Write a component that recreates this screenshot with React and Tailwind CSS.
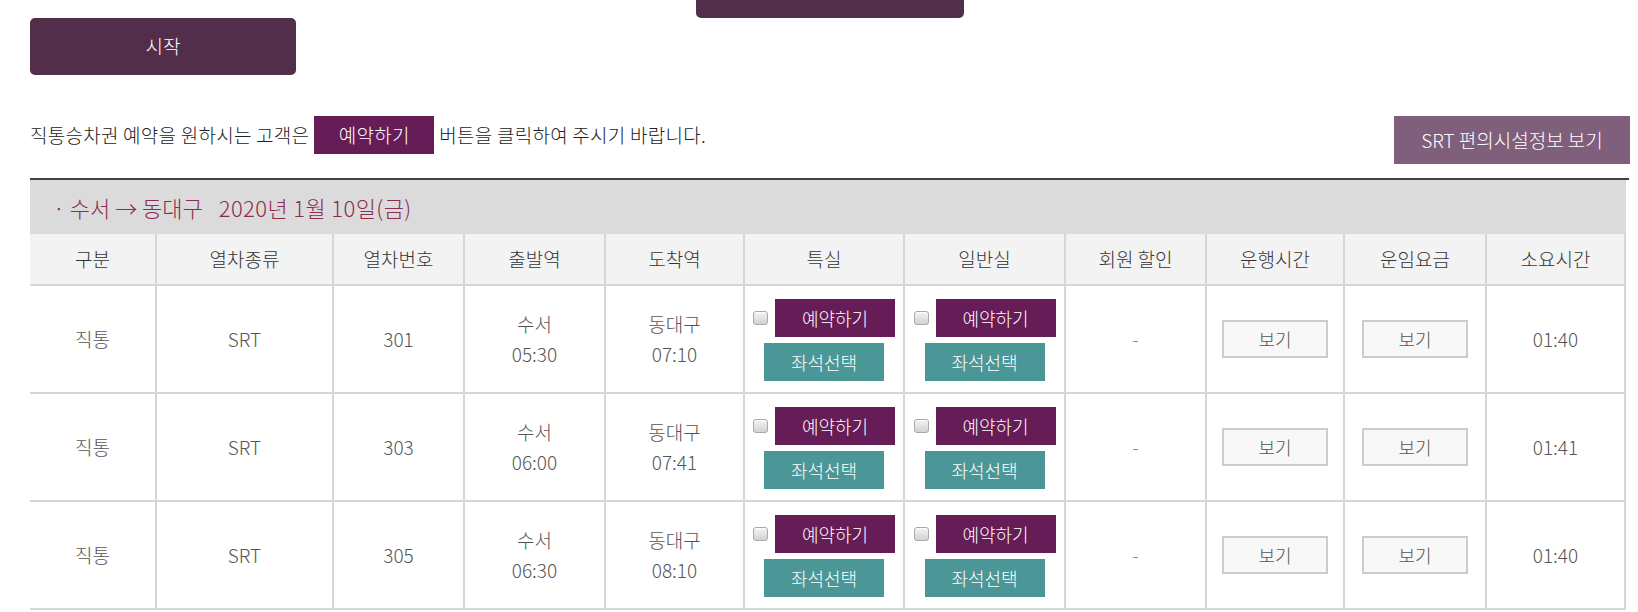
import React from 'react';

const font = { fontFamily: '"Noto Sans CJK KR", "Noto Sans", sans-serif' };

const trains = [
  { kind: '직통', type: 'SRT', no: '301', dep: '05:30', arr: '07:10', dur: '01:40' },
  { kind: '직통', type: 'SRT', no: '303', dep: '06:00', arr: '07:41', dur: '01:41' },
  { kind: '직통', type: 'SRT', no: '305', dep: '06:30', arr: '08:10', dur: '01:40' },
];

const headers = ['구분', '열차종류', '열차번호', '출발역', '도착역', '특실', '일반실', '회원 할인', '운행시간', '운임요금', '소요시간'];
const widths = [127, 177, 131, 141, 139, 160, 161, 141, 138, 142, 139];

const Check = () => (
  <span className="inline-block w-[15px] h-[14px] rounded-[3px] border border-[#a9a9a9] bg-gradient-to-b from-[#f4f4f4] to-[#d2d2d2] shadow-[inset_0_1px_0_#fff]" />
);

const SeatCell = () => (
  <td className="border-r-2 border-b-2 border-[#d6d6d6] align-top pt-[13px] h-[108px]">
    <div className="flex flex-col items-center gap-[6px]">
      <div className="flex items-center gap-[7px]">
        <Check />
        <button className="w-[120px] h-[38px] bg-[#661c57] text-white text-[18px] font-light">예약하기</button>
      </div>
      <button className="w-[120px] h-[38px] bg-[#4b9797] text-white text-[18px] font-light">좌석선택</button>
    </div>
  </td>
);

const ViewBtn = () => (
  <button className="w-[106px] h-[38px] border-2 border-[#cccccc] bg-[#f8f8f8] text-[#555] text-[18px] font-light">보기</button>
);

export default function App() {
  const cell = 'border-r-2 border-b-2 border-[#d6d6d6] text-center align-middle text-[#555] text-[19px] font-light h-[108px]';
  return (
    <div className="min-h-screen bg-white pl-[30px] pr-[8px] overflow-hidden" style={font}>
      <div className="h-[18px]">
        <div className="ml-[666px] w-[268px] h-[18px] bg-[#532e4b] rounded-b-[5px]" />
      </div>

      <button className="w-[266px] h-[57px] rounded-[5px] bg-[#532e4b] text-white text-[19px] font-light">시작</button>

      <div className="mt-[41px] flex items-start justify-between">
        <div className="flex items-center h-[38px] text-[19px] font-light text-[#222] tracking-[0.25px]">
          <span>직통승차권 예약을 원하시는 고객은</span>
          <span className="mx-[5px] w-[120px] h-[38px] flex items-center justify-center bg-[#661c57] text-white">예약하기</span>
          <span>버튼을 클릭하여 주시기 바랍니다.</span>
        </div>
        <button className="w-[236px] h-[48px] bg-[#7f5f7b] text-white text-[19px] font-light">SRT 편의시설정보 보기</button>
      </div>

      <div className="mt-[14px] w-[1599px] border-t-2 border-[#404040]" />

      <div className="w-[1596px] h-[54px] bg-[#dbdbdb] flex items-center pl-[23px] text-[22px] font-light text-[#8c2c4f]">
        <span>· 수서 → 동대구</span>
        <span className="ml-[16px] tracking-[0.4px]">2020년 1월 10일(금)</span>
      </div>

      <table className="w-[1596px] table-fixed border-separate border-spacing-0">
        <colgroup>
          {widths.map((w, i) => (
            <col key={i} style={{ width: w }} />
          ))}
        </colgroup>
        <thead>
          <tr>
            {headers.map((h) => (
              <th key={h} className="h-[52px] bg-[#f3f3f3] border-r-2 border-b-2 border-[#d6d6d6] font-light text-[19px] text-[#333] text-center align-middle">
                {h}
              </th>
            ))}
          </tr>
        </thead>
        <tbody>
          {trains.map((t) => (
            <tr key={t.no}>
              <td className={cell}>{t.kind}</td>
              <td className={cell}>{t.type}</td>
              <td className={cell}>{t.no}</td>
              <td className={`${cell} leading-[30px]`}>수서<br />{t.dep}</td>
              <td className={`${cell} leading-[30px]`}>동대구<br />{t.arr}</td>
              <SeatCell />
              <SeatCell />
              <td className={`${cell} text-[#888]`}>-</td>
              <td className={cell}><ViewBtn /></td>
              <td className={cell}><ViewBtn /></td>
              <td className={cell}>{t.dur}</td>
            </tr>
          ))}
        </tbody>
      </table>
    </div>
  );
}
